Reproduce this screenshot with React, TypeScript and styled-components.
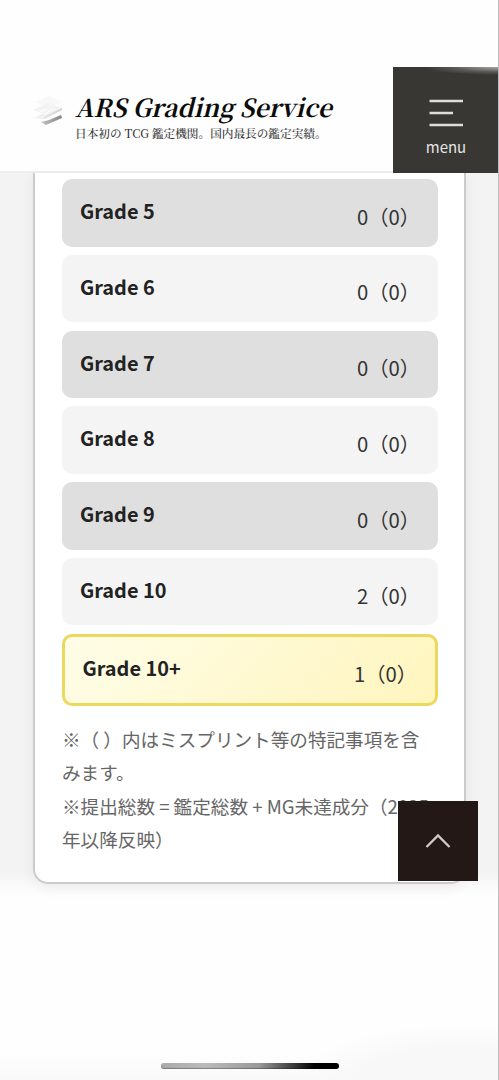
import React from "react";
import styled, { createGlobalStyle } from "styled-components";

const GlobalStyle = createGlobalStyle`
  * { box-sizing: border-box; }
  body { margin: 0; background: #fefefe; font-family: "Noto Sans CJK JP", sans-serif; }
`;

const Page = styled.div`
  position: relative;
  display: flex;
  flex-direction: column;
  width: 499px;
  height: 1080px;
  overflow: hidden;
  background: #fefefe;
  &::after {
    content: "";
    position: absolute;
    inset: 0 0 0 auto;
    width: 1px;
    background: #bdbdbd;
  }
`;

const Header = styled.header`
  flex: none;
  display: flex;
  justify-content: space-between;
  align-items: flex-end;
  height: 173px;
  background: linear-gradient(#fefefe 171px, #eeeeee 171px);
`;

const Brand = styled.div`
  display: flex;
  height: 106px;
  padding: 23px 0 0 30px;
`;

const LogoMark = styled.svg`
  display: block;
  width: 34px;
  height: 34px;
  margin: 4px 11px 0 0;
`;

const BrandText = styled.div`
  display: flex;
  flex-direction: column;
`;

const BrandName = styled.div`
  font: italic 700 24.6px/34px "Noto Serif CJK JP", "Liberation Serif", serif;
  color: #0b0b0b;
  white-space: nowrap;
`;

const Tagline = styled.div`
  font: 500 11.65px/18px "Noto Serif CJK JP", "Liberation Serif", serif;
  color: #333;
  white-space: nowrap;
`;

const MenuButton = styled.button`
  display: flex;
  flex-direction: column;
  align-items: center;
  width: 106px;
  height: 106px;
  padding: 32px 0 0;
  border: 0;
  background: radial-gradient(ellipse 75px 8px at 100% 0, #aaa 0, #77757390 60%, transparent 100%), #393734;
  color: #e6e6e4;
  font: 400 15px/20px "Noto Sans CJK JP", sans-serif;
`;

const Bars = styled.svg`
  display: block;
  width: 34px;
  height: 29px;
  margin-bottom: 9px;
`;

const Content = styled.main`
  flex: none;
  height: 735px;
  padding: 0 33px;
  background:
    linear-gradient(to bottom, transparent 698px, #fefefe 722px),
    #f3f3f3;
`;

const Card = styled.section`
  height: 711px;
  padding: 6px 27px 0;
  border: 2px solid #cbcbcb;
  border-top: 0;
  border-radius: 0 0 15px 15px;
  background: #fff;
  box-shadow: 0 4px 14px rgba(0, 0, 0, 0.06);
`;

const GradeList = styled.div`
  display: flex;
  flex-direction: column;
  gap: 8.3px;
`;

const Row = styled.div<{ $tone: "dark" | "light" | "gold" }>`
  display: flex;
  justify-content: space-between;
  align-items: flex-start;
  width: 375.5px;
  height: ${p => (p.$tone === "gold" ? "72.5px" : "67.5px")};
  padding: ${p => (p.$tone === "gold" ? "15.4px 17.5px 0" : "16px 17.5px 0 18px")};
  border: ${p => (p.$tone === "gold" ? "3px solid #ecd75f" : "0")};
  border-radius: 10px;
  background: ${p =>
    p.$tone === "gold"
      ? "linear-gradient(135deg, #fffde8, #fff5bd)"
      : p.$tone === "dark" ? "#dfdfdf" : "#f4f4f4"};
`;

const Grade = styled.span`
  font-size: 19.9px;
  line-height: 32px;
  font-weight: 700;
  color: #222;
`;

const Count = styled.span`
  margin-top: 4.7px;
  font-size: 20.3px;
  line-height: 32px;
  color: #333;
`;

const Notes = styled.p`
  margin: 15.7px 0 0;
  font-size: 18.6px;
  line-height: 33.3px;
  color: #666;
  white-space: nowrap;
`;

const TopButton = styled.button`
  position: absolute;
  left: 398px;
  top: 801px;
  display: grid;
  place-items: center;
  width: 80px;
  height: 79.5px;
  padding: 0;
  border: 0;
  background: #231815;
`;

const Footer = styled.footer`
  flex: 1;
  display: flex;
  justify-content: center;
  align-items: flex-end;
  padding-bottom: 11px;
  background:
    radial-gradient(ellipse 160px 55px at 92% 100%, #f8f8f8 60%, transparent 100%),
    linear-gradient(to bottom, transparent 145px, #f9f9f9 172px);
`;

const HomeIndicator = styled.div`
  width: 178px;
  height: 6px;
  border-radius: 3px;
  background: linear-gradient(98deg, #aaa 0%, #bbb 25%, #999 55%, #000 86%);
  box-shadow: inset 0 -1px 1px rgba(0, 0, 0, 0.3);
`;

const grades = [
  ["Grade 5", "0"],
  ["Grade 6", "0"],
  ["Grade 7", "0"],
  ["Grade 8", "0"],
  ["Grade 9", "0"],
  ["Grade 10", "2"],
  ["Grade 10+", "1"],
];

export default function App() {
  return (
    <>
      <GlobalStyle />
      <Page>
        <Header>
          <Brand>
            <LogoMark viewBox="0 0 34 34">
              <defs>
                <linearGradient id="layer" x1="0" x2="1">
                  <stop offset="0" stopColor="#c5c5c5" />
                  <stop offset="1" stopColor="#828282" />
                </linearGradient>
                <linearGradient id="middle" x1="0" x2="1">
                  <stop offset="0" stopColor="#f6f6f6" />
                  <stop offset="1" stopColor="#cfcfcf" />
                </linearGradient>
              </defs>
              <path d="M5 8 19 2 32 8 17 15Z" fill="#f8f8f8" />
              <path d="M3 16 17 9 32 14 17 21Z" fill="#f3f3f3" />
              <path d="m4 24 9-4 4 1 15-7v2L15 25Z" fill="url(#middle)" />
              <path d="m5 20 12-5m-6 9 12-10" stroke="#fff" strokeWidth="1" />
              <path d="m11 28 8-2 12-5 1 3L16 31Z" fill="url(#layer)" />
            </LogoMark>
            <BrandText>
              <BrandName>ARS Grading Service</BrandName>
              <Tagline>日本初の TCG 鑑定機関。国内最長の鑑定実績。</Tagline>
            </BrandText>
          </Brand>
          <MenuButton>
            <Bars viewBox="0 0 34 29" stroke="#deddda" strokeWidth="2.4">
              <path d="M.5 2H34M.5 14H24M.5 26H34" />
            </Bars>
            menu
          </MenuButton>
        </Header>
        <Content>
          <Card>
            <GradeList>
              {grades.map(([name, count], i) => (
                <Row key={name} $tone={i === 6 ? "gold" : i % 2 ? "light" : "dark"}>
                  <Grade>{name}</Grade>
                  <Count>{count}（0）</Count>
                </Row>
              ))}
            </GradeList>
            <Notes>
              ※（ ）内はミスプリント等の特記事項を含<br />
              みます。<br />
              ※提出総数 = 鑑定総数 + MG未達成分（2025<br />
              年以降反映）
            </Notes>
          </Card>
        </Content>
        <Footer>
          <HomeIndicator />
        </Footer>
        <TopButton aria-label="トップへ戻る">
          <svg width="26" height="16" viewBox="0 0 26 16" fill="none" stroke="#cfc9c8" strokeWidth="2.3">
            <path d="M1.5 14 13 2.5 24.5 14" />
          </svg>
        </TopButton>
      </Page>
    </>
  );
}
